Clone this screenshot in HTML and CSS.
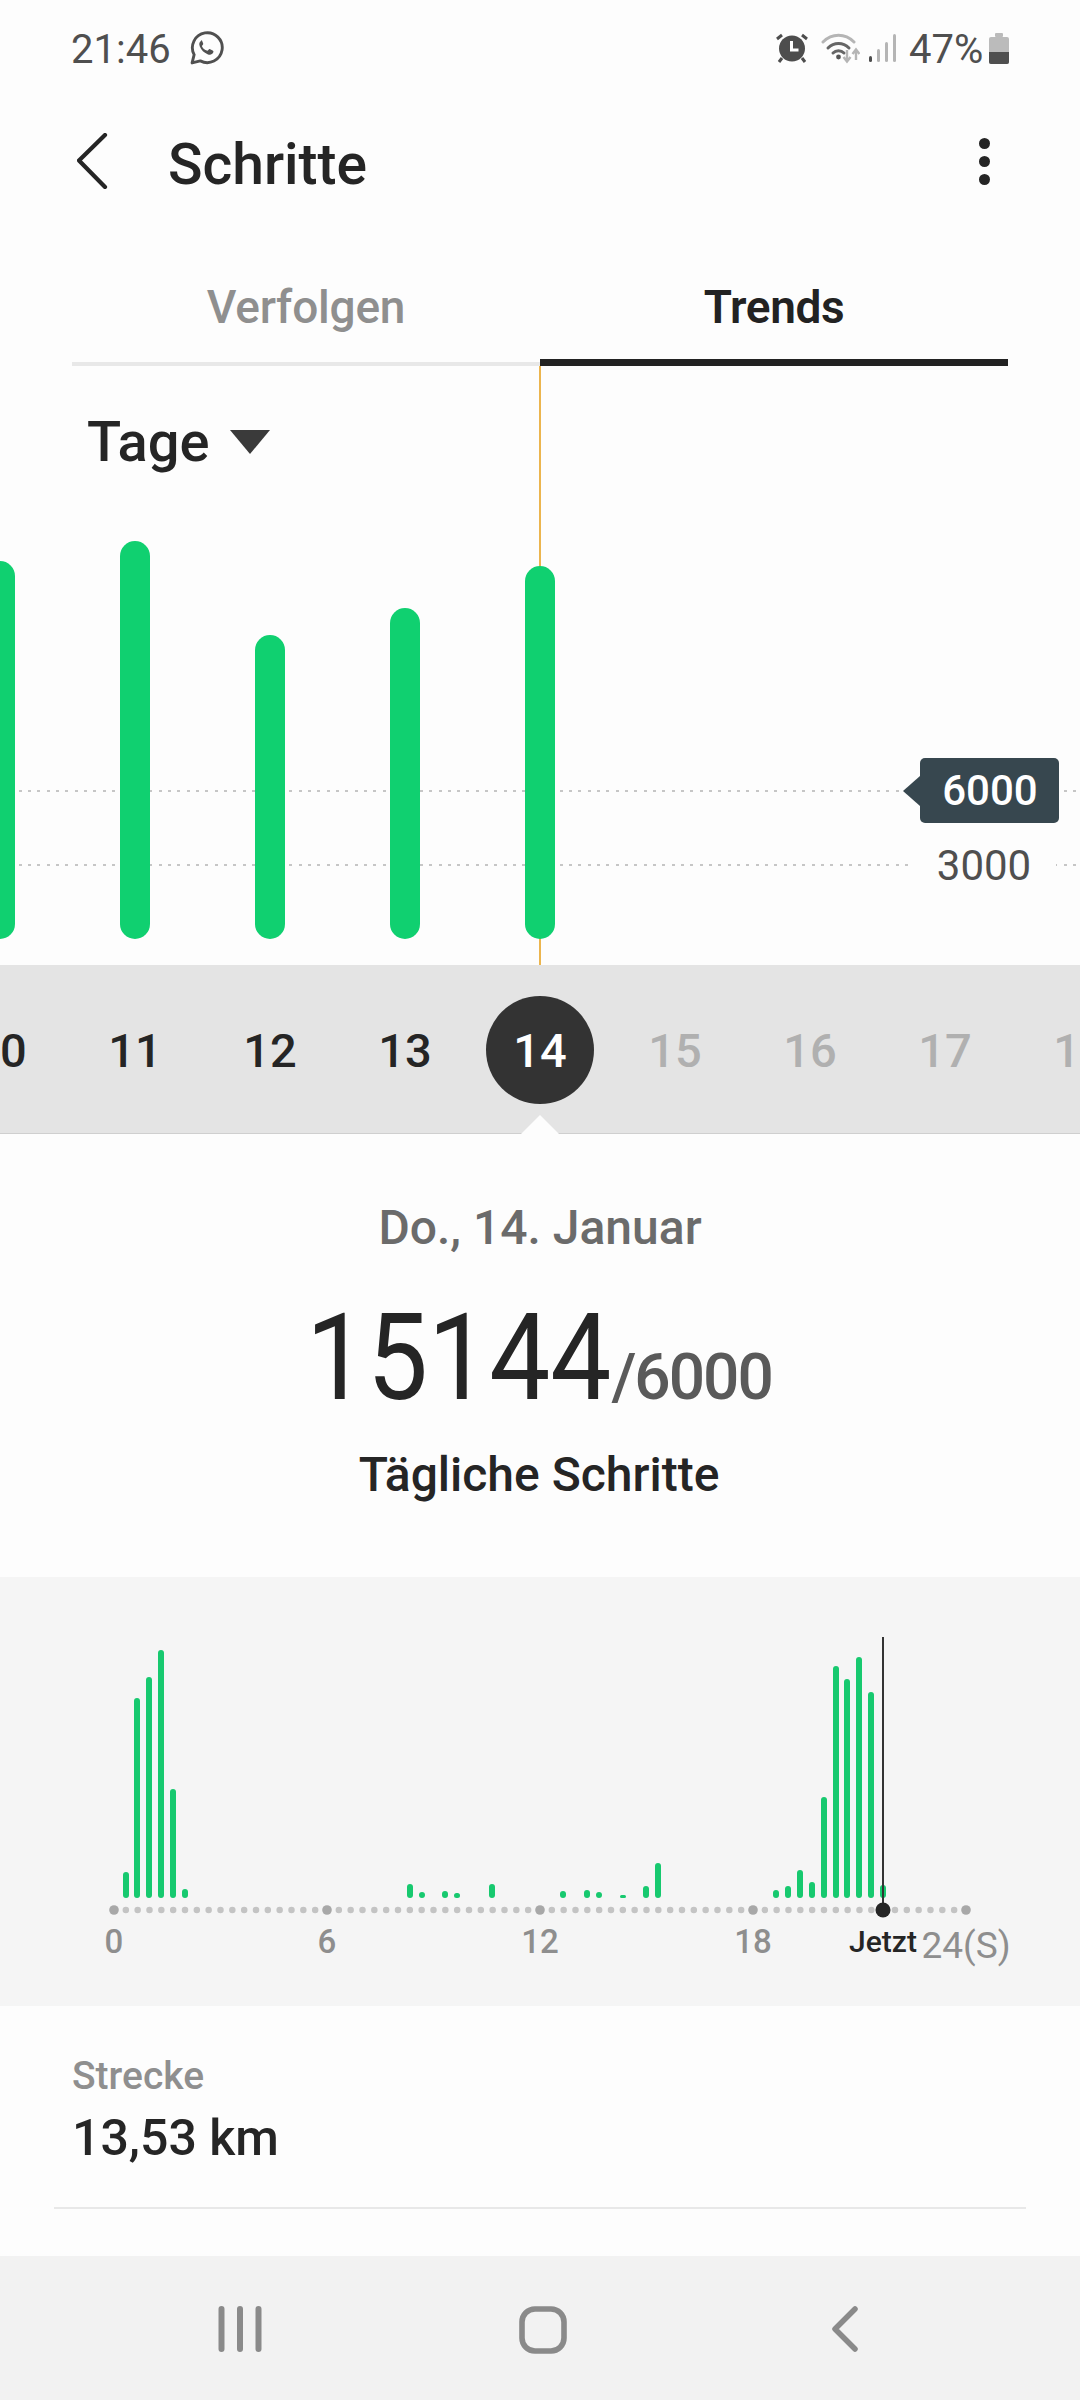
FILE: index.html
```html
<!DOCTYPE html>
<html lang="de">
<head>
<meta charset="utf-8">
<title>Schritte</title>
<link rel="stylesheet" href="styles.css">
</head>
<body>
<div class="phone">
  <header class="status">
    <div class="status-left">
      <span class="time">21:46</span>
      <svg class="ic-wa" viewBox="0 0 34 34"><path d="M3 31l2-8A14.500 14.500 0 1 1 11 29z" fill="none" stroke="#505050" stroke-width="2.800" stroke-linejoin="round"/><path d="M12 9.500c-2 1-2.500 3-1.500 5.500 1.500 3.500 4 6 7.500 7.500 2.500 1 4.500.5 5.500-1.500.5-1 .3-1.500-.5-2l-2.500-1.300c-.7-.3-1-.2-1.500.4l-1 1.200c-4-1.500-5-3.500-5.500-4.800l1-1.200c.4-.5.4-.8.2-1.300l-1-2.500c-.3-.7-.6-.6-1.200-.6z" fill="#505050"/></svg>
    </div>
    <div class="status-right">
      <svg class="ic-alarm" viewBox="0 0 32 30"><g fill="none" stroke="#4d4d4d" stroke-width="3"><path d="M1 6l5-4M31 6l-5-4M6 25l-3 4M26 25l3 4"/></g><circle cx="16" cy="15.500" r="13" fill="#4d4d4d"/><path d="M15.500 8v9h7" fill="none" stroke="#fff" stroke-width="3"/></svg>
      <svg class="ic-wifi" viewBox="0 0 39 32"><g fill="none" stroke-linecap="round" stroke-width="3"><path d="M2 10C11 1 24 1 33 10" stroke="#b5b5b5"/><path d="M7 16c6-6 15-6 21 0" stroke="#666"/><path d="M12 21c3-3 8-3 11 0" stroke="#666"/></g><circle cx="17.500" cy="25" r="2.400" fill="#555"/><path d="M26 18v11M22.500 25l3.500 4.500 3.500-4.500M35 28V18M31.500 22l3.500-4.500 3.500 4.500" fill="none" stroke="#b5b5b5" stroke-width="2.400"/></svg>
      <svg class="ic-signal" viewBox="0 0 27 28"><rect x="0" y="22" width="3" height="6" rx="1.500" fill="#4d4d4d"/><rect x="8" y="15" width="3" height="13" rx="1.500" fill="#b5b5b5"/><rect x="16" y="8" width="3" height="20" rx="1.500" fill="#b5b5b5"/><rect x="24" y="0" width="3" height="28" rx="1.500" fill="#b5b5b5"/></svg>
      <span class="pct">47%</span>
      <svg class="ic-batt" viewBox="0 0 20 31"><rect x="6" y="0" width="8" height="4" rx="1" fill="#bbb"/><rect x="0" y="4" width="20" height="27" rx="2" fill="#bbb"/><path d="M0 19h20v10a2 2 0 0 1-2 2H2a2 2 0 0 1-2-2z" fill="#4f4f4f"/></svg>
    </div>
  </header>

  <div class="appbar">
    <svg class="ic-back" viewBox="0 0 32 56"><path d="M28 2L2 27.500 28 54" fill="none" stroke="#252525" stroke-width="4.200" stroke-linecap="round" stroke-linejoin="round"/></svg>
    <h1 class="title">Schritte</h1>
    <div class="more"><i></i><i></i><i></i></div>
  </div>

  <nav class="tabs">
    <div class="tab">Verfolgen</div>
    <div class="tab active">Trends</div>
  </nav>

  <section class="trend">
    <div class="cursor"></div>
    <div class="grid-line g6000"></div>
    <div class="grid-line g3000"></div>
    <div class="tag">6000</div>
    <div class="tag-plain">3000</div>
    <div class="range"><span>Tage</span><i class="caret"></i></div>
    <div class="bars">
      <div class="bar" style="height:378px"></div>
      <div class="bar" style="height:398px"></div>
      <div class="bar" style="height:304px"></div>
      <div class="bar" style="height:331px"></div>
      <div class="bar" style="height:373px"></div>
    </div>
  </section>

  <section class="days">
    <span class="day">10</span>
    <span class="day">11</span>
    <span class="day">12</span>
    <span class="day">13</span>
    <span class="day today"><b>14</b></span>
    <span class="day future">15</span>
    <span class="day future">16</span>
    <span class="day future">17</span>
    <span class="day future">18</span>
  </section>

  <section class="summary">
    <div class="date">Do., 14. Januar</div>
    <div class="count"><span class="big">15144</span><span class="goal">/6000</span></div>
    <div class="label">Tägliche Schritte</div>
  </section>

  <section class="hourly">
    <svg class="hourly-chart" viewBox="0 0 1080 350" width="1080" height="350">
      <line class="axis-dots" x1="114" y1="333" x2="966" y2="333"/>
      <g class="axis-major"><circle cx="114" cy="333" r="4.800"/><circle cx="327" cy="333" r="4.800"/><circle cx="540" cy="333" r="4.800"/><circle cx="753" cy="333" r="4.800"/><circle cx="966" cy="333" r="4.800"/></g>
      <g class="hbars">
        <rect x="123" y="295" width="6" height="26" rx="3"/>
        <rect x="134" y="121" width="6" height="200" rx="3"/>
        <rect x="146" y="100" width="6" height="221" rx="3"/>
        <rect x="158" y="73" width="6" height="248" rx="3"/>
        <rect x="170" y="212" width="6" height="109" rx="3"/>
        <rect x="182" y="312" width="6" height="9" rx="3"/>
        <rect x="407" y="307" width="6" height="14" rx="3"/>
        <rect x="419" y="315" width="6" height="6" rx="3"/>
        <rect x="442" y="314" width="6" height="7" rx="3"/>
        <rect x="454" y="316" width="6" height="5" rx="2.500"/>
        <rect x="489" y="307" width="6" height="14" rx="3"/>
        <rect x="560" y="314" width="6" height="7" rx="3"/>
        <rect x="584" y="313" width="6" height="8" rx="3"/>
        <rect x="596" y="315" width="6" height="6" rx="3"/>
        <rect x="620" y="318" width="6" height="3" rx="1.500"/>
        <rect x="643" y="309" width="6" height="12" rx="3"/>
        <rect x="655" y="286" width="6" height="35" rx="3"/>
        <rect x="773" y="313" width="6" height="8" rx="3"/>
        <rect x="785" y="309" width="6" height="12" rx="3"/>
        <rect x="797" y="293" width="6" height="28" rx="3"/>
        <rect x="809" y="305" width="6" height="16" rx="3"/>
        <rect x="821" y="220" width="6" height="101" rx="3"/>
        <rect x="833" y="89" width="6" height="232" rx="3"/>
        <rect x="844" y="102" width="6" height="219" rx="3"/>
        <rect x="856" y="80" width="6" height="241" rx="3"/>
        <rect x="868" y="115" width="6" height="206" rx="3"/>
        <rect x="880" y="308" width="6" height="13" rx="3"/>
      </g>
      <line class="now-line" x1="883" y1="60" x2="883" y2="333"/>
      <circle class="now-dot" cx="883" cy="333" r="7.500"/>
    </svg>
    <div class="hour-labels">
      <span class="h0">0</span>
      <span class="h6">6</span>
      <span class="h12">12</span>
      <span class="h18">18</span>
      <span class="now">Jetzt</span>
      <span class="h24">24(S)</span>
    </div>
  </section>

  <section class="distance">
    <div class="d-label">Strecke</div>
    <div class="d-value">13,53 km</div>
  </section>
  <div class="rule"></div>

  <footer class="navbar">
    <svg class="nav-recent" viewBox="0 0 44 46"><path d="M3.500 3v40M22 3v40M40.500 3v40" fill="none" stroke="#8a8a8a" stroke-width="6" stroke-linecap="round"/></svg>
    <svg class="nav-home" viewBox="0 0 48 48"><rect x="3" y="3" width="42" height="42" rx="13" fill="none" stroke="#8a8a8a" stroke-width="5.600"/></svg>
    <svg class="nav-back" viewBox="0 0 26 46"><path d="M23 3L3 23l20 20" fill="none" stroke="#8a8a8a" stroke-width="5.500" stroke-linecap="round" stroke-linejoin="round"/></svg>
  </footer>
</div>
</body>
</html>
```
FILE: styles.css
```css
* { box-sizing: border-box; }
html, body { margin: 0; padding: 0; }
body { background: #fdfdfd; font-family: Roboto, "Noto Sans", sans-serif; color: #252525; }
.phone { width: 1080px; height: 2400px; overflow: hidden; display: flex; flex-direction: column; }

.status { height: 96px; flex: none; padding: 0 71px; display: flex; justify-content: space-between; align-items: center; font-size: 40px; font-weight: 450; color: #4f4f4f; }
.status-left { display: flex; align-items: center; gap: 18px; }
.status-right { display: flex; align-items: center; }
.time { padding-top: 3px; }
.ic-wa { width: 35px; height: 35px; }
.ic-alarm { width: 32px; height: 30px; }
.ic-wifi { width: 39px; height: 32px; margin-left: 13px; }
.ic-signal { width: 27px; height: 28px; margin-left: 9px; }
.pct { margin-left: 13px; width: 74px; padding-top: 3px; line-height: 32px; white-space: nowrap; }
.ic-batt { width: 20px; height: 31px; margin-left: 6px; }

.appbar { height: 134px; flex: none; padding: 0 72px 4px 77px; display: flex; align-items: center; }
.ic-back { width: 32px; height: 56px; }
.title { margin: 6px 0 0 59px; font-size: 57px; font-weight: 500; flex: 1; }
.more { display: flex; flex-direction: column; gap: 7px; padding-right: 18px; }
.more i { width: 11px; height: 11px; border-radius: 50%; background: #252525; }

.tabs { height: 136px; flex: none; margin: 0 72px; display: flex; }
.tab { flex: 1; text-align: center; padding-top: 50px; font-size: 46px; line-height: 54px; font-weight: 500; letter-spacing: -.2px; color: #8f8f8f; border-bottom: 4px solid #e8e8e8; }
.tab.active { color: #222; font-weight: 600; letter-spacing: -.4px; border-bottom: 7px solid #222; }

.trend { height: 599px; flex: none; position: relative; overflow: hidden; }
.cursor { position: absolute; left: 539px; top: 0; bottom: 0; width: 2px; background: #ecb54e; }
.grid-line { position: absolute; left: 0; right: 0; height: 2px; background: repeating-linear-gradient(to right, #c6c6c6 0 3px, transparent 3px 9.330px); }
.g6000 { top: 424px; }
.g3000 { top: 498px; }
.tag { position: absolute; left: 920px; top: 392px; width: 139px; height: 65px; background: #37474f; border-radius: 5px; color: #fff; font-size: 42px; font-weight: 500; line-height: 66px; text-align: center; padding-left: 1px; }
.tag::before { content: ""; position: absolute; left: -17px; top: 18px; border: 15px solid transparent; border-left: 0; border-right: 17px solid #37474f; }
.tag-plain { position: absolute; left: 912px; top: 466px; width: 144px; height: 66px; background: #fdfdfd; color: #4f4f4f; font-size: 42px; font-weight: 450; line-height: 68px; text-align: center; }

.range { position: relative; padding: 46px 0 0 87px; display: flex; align-items: center; gap: 21px; font-size: 56px; line-height: 60px; font-weight: 500; }
.caret { width: 0; height: 0; border-left: 20px solid transparent; border-right: 20px solid transparent; border-top: 24px solid #3a3a3a; }
.bars { position: absolute; left: -15px; bottom: 26px; display: flex; align-items: flex-end; gap: 105px; }
.bar { width: 30px; border-radius: 15px; background: #10d070; }

.days { height: 169px; flex: none; position: relative; display: flex; align-items: center; margin-left: -67.500px; width: 1300px; background: #e4e4e4; border-bottom: 1px solid #cfcfcf; padding-top: 2px; }
.day { width: 135px; flex: none; text-align: center; font-size: 47px; font-weight: 500; color: #252525; }
.day.future { color: #b0b0b0; }
.today b { display: block; width: 108px; height: 108px; margin: 0 auto; border-radius: 50%; background: #333; color: #fff; font-weight: 500; line-height: 110px; }
.days::after { content: ""; position: absolute; left: 588.500px; bottom: -1px; border-left: 19px solid transparent; border-right: 19px solid transparent; border-bottom: 19px solid #fdfdfd; }

.summary { height: 443px; flex: none; text-align: center; padding-top: 68px; }
.date { font-size: 48px; line-height: 52px; font-weight: 500; color: #6b6b6b; }
.count { margin-top: 44px; height: 120px; line-height: 120px; display: flex; justify-content: center; align-items: baseline; padding-right: 2px; }
.big { display: block; font-size: 120px; margin-left: -32px; transform: scaleX(.905); transform-origin: right center; color: #252525; }
.goal { font-size: 64px; font-weight: 500; letter-spacing: -2px; color: #5a5a5a; }
.label { margin-top: 30px; font-size: 48px; line-height: 54px; font-weight: 500; color: #252525; padding-right: 2px; }

.hourly { height: 429px; flex: none; background: #f5f5f5; position: relative; }
.hourly-chart { display: block; }
.axis-dots { stroke: #c4c4c4; stroke-width: 6.500; stroke-linecap: round; stroke-dasharray: 0 11.833; }
.axis-major circle { fill: #a8a8a8; }
.hbars rect { fill: #17c96f; }
.now-line { stroke: #333; stroke-width: 2; }
.now-dot { fill: #252525; }
.hour-labels { position: relative; height: 50px; margin-top: -5px; font-size: 33px; font-weight: 500; line-height: 40px; color: #8e8e8e; }
.hour-labels span { position: absolute; top: 0; transform: translateX(-50%); }
.h0 { left: 114px; }
.h6 { left: 327px; }
.h12 { left: 540px; }
.h18 { left: 753px; }
.hour-labels .now { left: 883px; font-size: 30px; font-weight: 500; color: #252525; }
.hour-labels .h24 { left: 966px; top: 4px; font-size: 37px; font-weight: 400; }

.distance { height: 201px; flex: none; padding: 48px 72px 0; }
.d-label { font-size: 39px; line-height: 44px; font-weight: 500; color: #8f8f8f; }
.d-value { margin-top: 12px; font-size: 50px; line-height: 56px; font-weight: 500; }
.rule { height: 2px; flex: none; margin: 0 54px; background: #e8e8e8; }

.navbar { margin-top: 47px; height: 144px; flex: none; background: #f2f2f2; position: relative; display: block; }
.navbar svg { position: absolute; top: 50px; }
.nav-recent { left: 218px; width: 44px; height: 46px; }
.nav-home { left: 519px; width: 48px; height: 48px; }
.nav-back { left: 832px; width: 26px; height: 46px; }
```
